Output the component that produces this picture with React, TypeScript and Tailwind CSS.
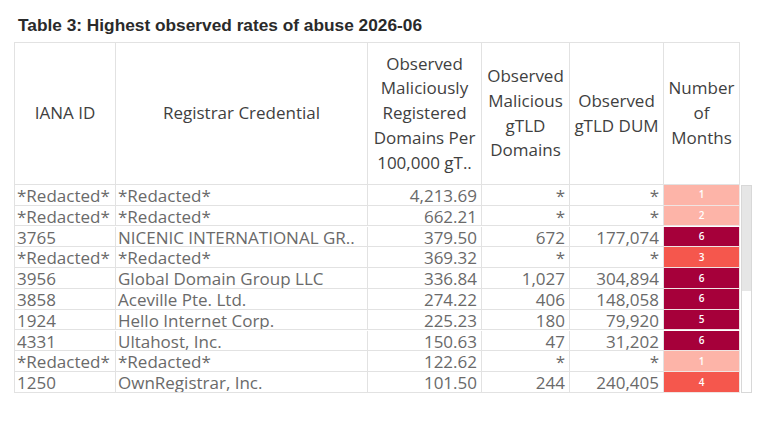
import React from "react";

type Row = {
  id: string;
  name: string;
  rate: string;
  mal: string;
  dum: string;
  months: number;
};

const rows: Row[] = [
  { id: "*Redacted*", name: "*Redacted*", rate: "4,213.69", mal: "*", dum: "*", months: 1 },
  { id: "*Redacted*", name: "*Redacted*", rate: "662.21", mal: "*", dum: "*", months: 2 },
  { id: "3765", name: "NICENIC INTERNATIONAL GR..", rate: "379.50", mal: "672", dum: "177,074", months: 6 },
  { id: "*Redacted*", name: "*Redacted*", rate: "369.32", mal: "*", dum: "*", months: 3 },
  { id: "3956", name: "Global Domain Group LLC", rate: "336.84", mal: "1,027", dum: "304,894", months: 6 },
  { id: "3858", name: "Aceville Pte. Ltd.", rate: "274.22", mal: "406", dum: "148,058", months: 6 },
  { id: "1924", name: "Hello Internet Corp.", rate: "225.23", mal: "180", dum: "79,920", months: 5 },
  { id: "4331", name: "Ultahost, Inc.", rate: "150.63", mal: "47", dum: "31,202", months: 6 },
  { id: "*Redacted*", name: "*Redacted*", rate: "122.62", mal: "*", dum: "*", months: 1 },
  { id: "1250", name: "OwnRegistrar, Inc.", rate: "101.50", mal: "244", dum: "240,405", months: 4 },
];

function monthClass(m: number): string {
  if (m >= 5) return "bg-[#a6003a]";
  if (m >= 3) return "bg-[#f5574d]";
  return "bg-[#fdb4a8]";
}

const cols = "grid grid-cols-[101px_252px_114px_88px_94px_76px]";
const hcell =
  "flex items-center justify-center text-center border-r border-b border-[#e2e2e2] leading-[24.7px]";
const bcell =
  "h-[20.7px] leading-[20.7px] pt-[1px] border-r border-b border-[#e2e2e2] whitespace-nowrap overflow-hidden";

export default function App() {
  return (
    <div className="w-[768px] h-[427px] bg-white overflow-hidden">
      <div
        className="h-[42px] pt-[15px] pl-[18px] text-[17.3px] leading-[20px] font-bold text-[#2a2a2a]"
        style={{ fontFamily: '"Liberation Sans", Arial, sans-serif' }}
      >
        Table 3: Highest observed rates of abuse 2026-06
      </div>
      <div
        className="ml-[14px] text-[17px]"
        style={{ fontFamily: '"Open Sans", "Noto Sans", sans-serif' }}
      >
        <div className={`${cols} w-[726px] h-[143px] border-l border-t border-[#e2e2e2] text-[#3f3f3f]`}>
          <div className={hcell}>IANA ID</div>
          <div className={hcell}>Registrar Credential</div>
          <div className={hcell}>
            Observed
            <br />
            Maliciously
            <br />
            Registered
            <br />
            Domains Per
            <br />
            100,000 gT..
          </div>
          <div className={hcell}>
            Observed
            <br />
            Malicious
            <br />
            gTLD
            <br />
            Domains
          </div>
          <div className={hcell}>
            Observed
            <br />
            gTLD DUM
          </div>
          <div className={hcell}>
            Number
            <br />
            of
            <br />
            Months
          </div>
        </div>
        <div className="flex">
          <div className={`${cols} w-[726px] border-l border-[#e2e2e2] text-[#6a6a6a]`}>
            {rows.map((r, i) => (
              <React.Fragment key={i}>
                <div className={`${bcell} pl-[2px]`}>{r.id}</div>
                <div className={`${bcell} pl-[2px]`}>{r.name}</div>
                <div className={`${bcell} text-right pr-[4px]`}>{r.rate}</div>
                <div className={`${bcell} text-right pr-[4px]`}>{r.mal}</div>
                <div className={`${bcell} text-right pr-[4px]`}>{r.dum}</div>
                <div
                  className={`h-[20.7px] border-r border-b border-[#f0e4e2] flex items-center justify-center text-[10px] font-semibold text-white ${monthClass(
                    r.months
                  )}`}
                >
                  {r.months}
                </div>
              </React.Fragment>
            ))}
          </div>
          <div className="ml-[1px] w-[11px] h-[208px] border border-[#d8d8d8] bg-white flex flex-col">
            <div className="h-[105px] bg-[#e6e6e6]" />
          </div>
        </div>
      </div>
    </div>
  );
}
